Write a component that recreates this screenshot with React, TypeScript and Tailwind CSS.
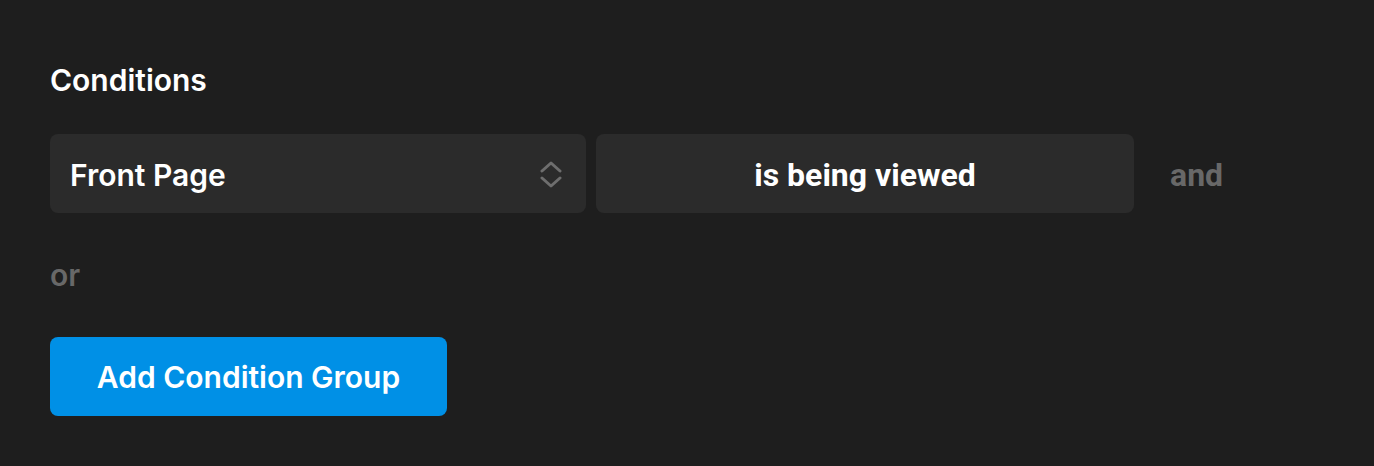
export default function App() {
  return (
    <div className="min-h-[466px] w-full bg-[#1e1e1e] px-[50px] pt-[60px] font-['Inter',sans-serif] text-white">
      <h2 className="text-[30px] font-semibold leading-[40px]">Conditions</h2>

      <div className="mt-[34px] flex items-center">
        <div className="flex h-[79px] w-[536px] items-center justify-between rounded-lg bg-[#2b2b2b] pl-[20px] pr-[24px] pt-[3px]">
          <span className="text-[30px] font-semibold">Front Page</span>
          <svg width="22" height="28" viewBox="0 0 22 28" fill="none" stroke="#6e6e6e" strokeWidth="3" strokeLinecap="round" strokeLinejoin="round">
            <path d="M2 10 L11 2 L20 10" />
            <path d="M2 17 L11 25 L20 17" />
          </svg>
        </div>
        <div className="ml-[10px] flex h-[79px] w-[538px] items-center justify-center rounded-lg bg-[#2b2b2b] pt-[3px] font-['Roboto',sans-serif] text-[32px] font-bold">
          is being viewed
        </div>
        <span className="ml-[36px] pt-[3px] font-['Roboto',sans-serif] text-[32px] font-bold text-[#686868]">and</span>
      </div>

      <div className="mt-[42px] text-[30px] font-semibold leading-[40px] text-[#686868]">or</div>

      <button className="mt-[42px] flex h-[79px] w-[397px] items-center justify-center rounded-lg bg-[#0090e6] pt-[2px] text-[30px] font-semibold text-white">
        Add Condition Group
      </button>
    </div>
  );
}
